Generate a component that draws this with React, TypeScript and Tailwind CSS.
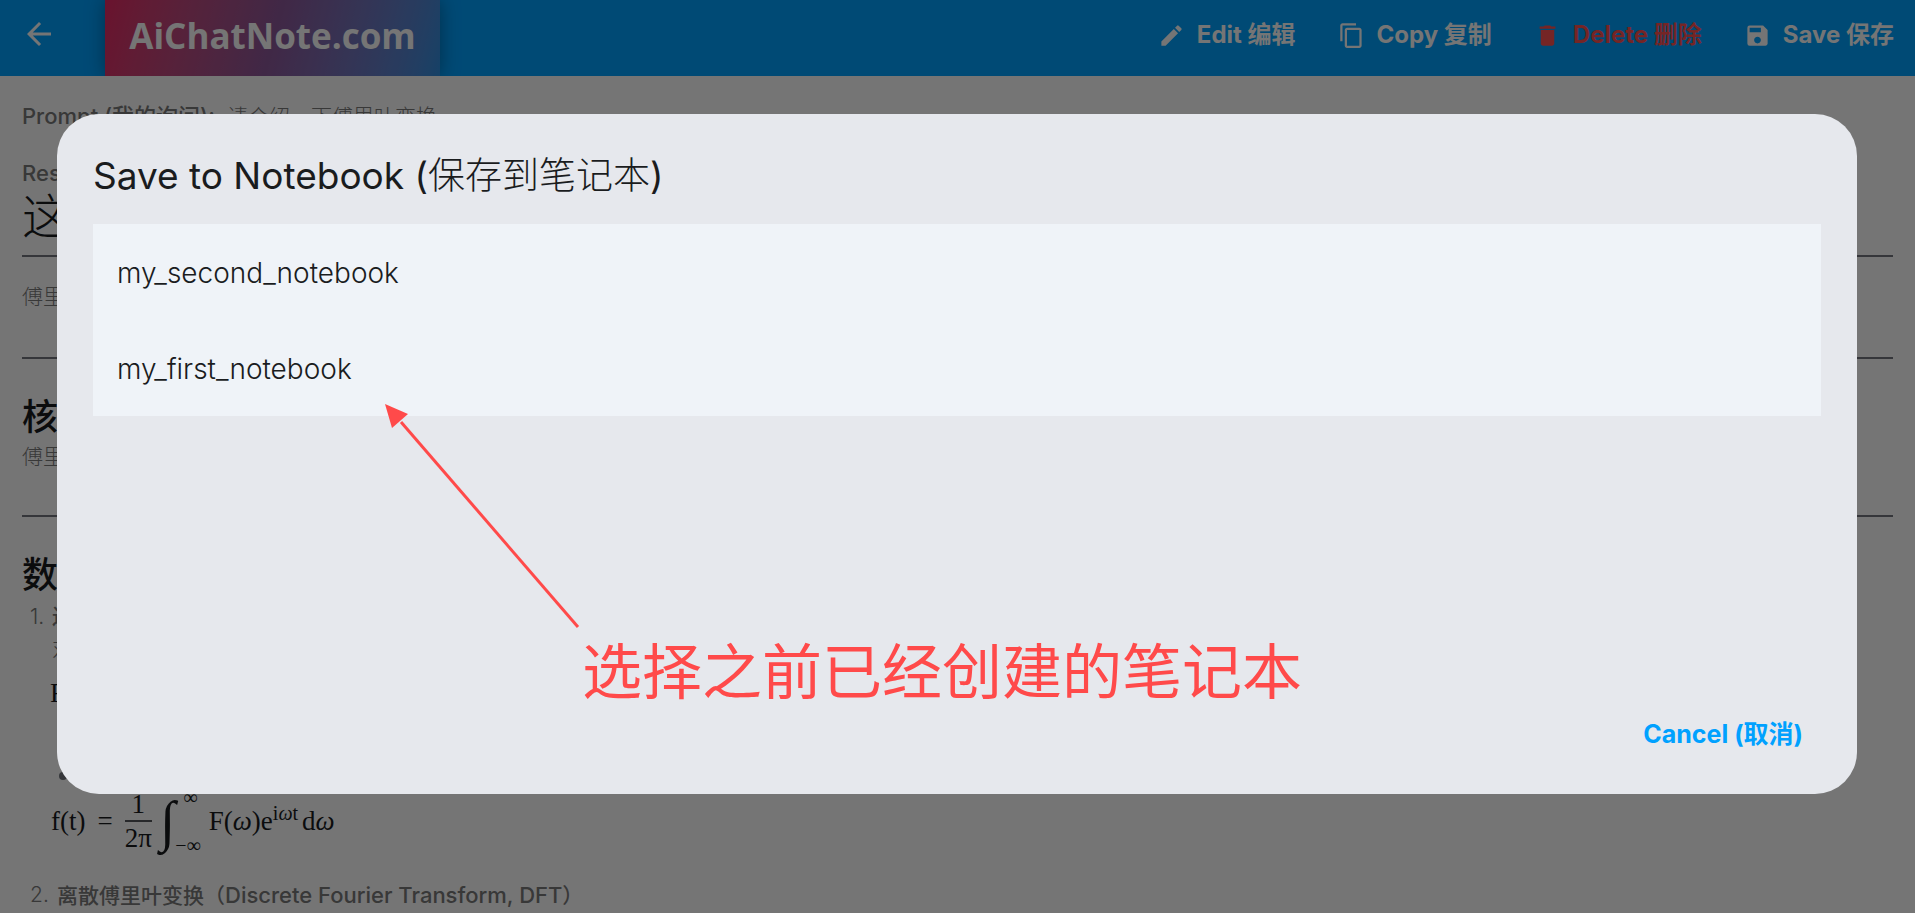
import React, { useState } from 'react';
import { MdArrowBack, MdContentCopy, MdDelete, MdEdit, MdSave } from 'react-icons/md';

const NOTEBOOKS = ['my_second_notebook', 'my_first_notebook'];

const ACTIONS = [
  { label: 'Edit 编辑', icon: MdEdit, color: 'text-white' },
  { label: 'Copy 复制', icon: MdContentCopy, color: 'text-white' },
  { label: 'Delete 删除', icon: MdDelete, color: 'text-[#ff5252]' },
  { label: 'Save 保存', icon: MdSave, color: 'text-white' },
];

const Header: React.FC = () => (
  <header className="flex h-[76px] items-center overflow-hidden bg-[#00a1ff] px-[21px]">
    <button aria-label="Back" className="mr-12 -mt-2 text-white"><MdArrowBack size={36} /></button>
    <div className="flex h-full w-[335px] items-center justify-center bg-linear-105 from-[#e62864] via-[#8d5799] to-[#2f8fe0] pb-1 shadow-[0_0_18px_rgba(0,0,0,0.35)]">
      <span className="font-['Open_Sans'] text-[35px] font-bold text-white">AiChatNote.com</span>
    </div>
    <nav className="-mt-1.5 ml-auto flex items-center gap-[42px]">
      {ACTIONS.map(({ label, icon: Icon, color }) => (
        <button key={label} className={`flex items-center gap-3 text-2xl font-bold ${color}`}><Icon size={27} />{label}</button>
      ))}
    </nav>
  </header>
);

const InverseFormula: React.FC = () => (
  <div className="flex h-16 items-center pl-[29px] font-['Liberation_Serif','DejaVu_Serif',serif] text-[27px] leading-8 text-[#1a1c1e]">
    <span>f(t)</span>
    <span className="ml-3">=</span>
    <span className="mr-2 ml-3 flex flex-col items-center">
      <span className="px-1 leading-8">1</span>
      <span className="border-t-2 border-[#55585c] leading-8">2π</span>
    </span>
    <span className="text-[56px] leading-[64px]">∫</span>
    <span className="mr-2 flex h-16 flex-col justify-between text-xl leading-4">
      <span className="pl-2">∞</span>
      <span>−∞</span>
    </span>
    <span>F(<i>ω</i>)e</span>
    <span className="mr-1 mb-4 text-xl leading-4">i<i>ω</i>t</span>
    <span>d<i>ω</i></span>
  </div>
);

const Article: React.FC = () => (
  <main className="px-[22px] pt-6 text-[21px] leading-8 text-[#7a7a7a]">
    <p className="font-light"><span className="mr-3 text-[22px] font-medium">Prompt (我的询问):</span>请介绍一下傅里叶变换</p>
    <p className="mt-6 text-[22px] font-medium">Res</p>
    <h1 className="text-5xl leading-[56px] font-light text-[#1a1c1e]">这</h1>
    <hr className="mt-[10px] border-t-2 border-[#73777f]" />
    <p className="mt-6 font-light">傅里</p>
    <hr className="mt-11 border-t-2 border-[#73777f]" />
    <h2 className="mt-[34px] text-4xl leading-[48px] font-medium text-[#1a1c1e]">核</h2>
    <p className="font-light">傅里</p>
    <hr className="mt-[42px] border-t-2 border-[#73777f]" />
    <h2 className="mt-[34px] text-4xl leading-[48px] font-medium text-[#1a1c1e]">数</h2>
    <div className="mt-0.5 flex pl-2 font-light">
      <span className="w-[22px]">1.</span>
      <div>
        <p className="font-medium">连</p>
        <p>对</p>
      </div>
    </div>
    <p className="mt-3 pl-7 font-['Liberation_Serif'] text-[27px] text-[#1a1c1e]">F</p>
    <div className="mt-[63px] ml-[37px] size-2 rounded-full bg-[#73777f]" />
    <div className="mt-[9px]"><InverseFormula /></div>
    <div className="mt-[26px] flex pl-2">
      <span className="w-[27px] font-light">2.</span>
      <p className="font-medium">离散傅里叶变换（<span className="text-[22px]">Discrete Fourier Transform, DFT</span>）</p>
    </div>
  </main>
);

const SaveDialog: React.FC<{ onClose: () => void }> = ({ onClose }) => (
  <div className="fixed inset-0 flex bg-black/54 pt-[114px] pr-[58px] pb-[119px] pl-[57px]">
    <section role="dialog" aria-labelledby="dialog-title" className="flex flex-1 flex-col rounded-[42px] bg-[#e6e8ed] p-9 text-[#1a1c1e]">
      <h2 id="dialog-title" className="text-[37px] leading-[52px]">Save to Notebook (<span className="font-light">保存到笔记本</span>)</h2>
      <ul className="mt-[22px] bg-[#eff3f8]">
        {NOTEBOOKS.map(name => (
          <li key={name}><button className="h-24 w-full px-6 pt-0.5 text-left text-[28px] font-light">{name}</button></li>
        ))}
      </ul>
      <div className="mt-auto flex justify-end pr-[18px]">
        <button onClick={onClose} className="h-12 pt-0.5 text-[25px] font-bold text-[#00a1ff]">Cancel (取消)</button>
      </div>
    </section>
  </div>
);

// Hint drawn on top of the dialog: arrow towards the list and its caption
const Hint: React.FC = () => (
  <div className="pointer-events-none fixed top-[404px] left-[385px] text-[#ff4a4a]">
    <svg width="196" height="226" viewBox="0 0 196 226" fill="none">
      <path d="M16 18 193 223" stroke="currentColor" strokeWidth="3" />
      <path d="M0 0 23 10 7 24Z" fill="currentColor" />
    </svg>
    <p className="ml-[197px] text-6xl leading-[84px] whitespace-nowrap">选择之前已经创建的笔记本</p>
  </div>
);

const App: React.FC = () => {
  const [showDialog, setShowDialog] = useState(true);

  return (
    <div className="h-screen overflow-hidden bg-white font-['Inter','Noto_Sans_CJK_SC',sans-serif]">
      <Header />
      <Article />
      {showDialog && <SaveDialog onClose={() => setShowDialog(false)} />}
      {showDialog && <Hint />}
    </div>
  );
};

export default App;
